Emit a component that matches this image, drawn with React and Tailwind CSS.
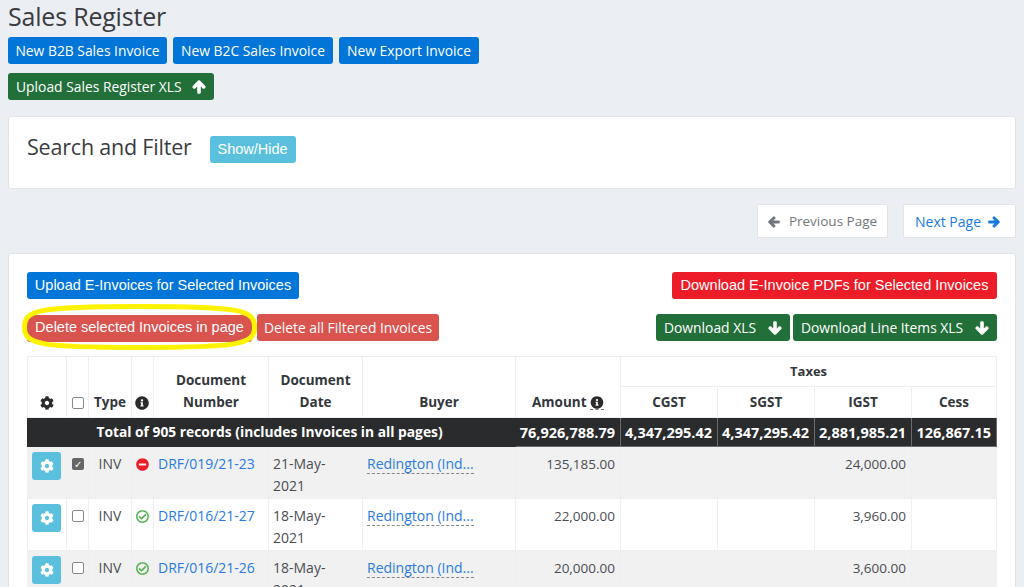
import React from 'react';
import { FaArrowUp, FaArrowDown, FaArrowLeft, FaArrowRight, FaCog, FaInfoCircle, FaMinusCircle, FaRegCheckCircle } from 'react-icons/fa';

const ROWS = [
  { doc: 'DRF/019/21-23', date: ['21-May-', '2021'], amount: '135,185.00', igst: '24,000.00', checked: true, cancelled: true },
  { doc: 'DRF/016/21-27', date: ['18-May-', '2021'], amount: '22,000.00', igst: '3,960.00' },
  { doc: 'DRF/016/21-26', date: ['18-May-', '2021'], amount: '20,000.00', igst: '3,600.00' },
];

const btn = 'inline-flex items-center h-[27px] px-2 rounded-[3px] text-white whitespace-nowrap';
const btnSegoe = `${btn} pt-[2px] text-[13.85px]`;
const btnArial = `${btn} text-[14.5px] font-['Liberation_Sans',Arial,sans-serif]`;
const segoe = "font-['Open_Sans','Noto_Sans',sans-serif]";
const cell = 'border border-[#efefef] align-top';
const text = 'pt-[6px] text-[14px] leading-[22px]';
const money = 'pt-[6px] pr-[5px] text-right text-[13.5px] leading-[22px]';
const head = 'border border-[#efefef] align-bottom text-center font-bold text-[13.5px] leading-[22px] text-[#33373c] pb-[4px] px-1';
const total = 'border border-[#6b6b6b] text-right font-bold text-[14.5px] text-white pr-[5px] h-[29px] whitespace-nowrap';
const thick = 'stroke-[50]';

export default function App() {
  return (
    <div className={`w-[1024px] h-[587px] overflow-hidden bg-[#ebeef3] px-2 text-[#4a4e53] ${segoe}`}>
      <h1 className="h-[37px] pt-[1px] text-[25px] leading-[30px] font-medium text-[#3a3c40] tracking-[-0.2px]">Sales Register</h1>

      <div className="flex gap-[6px]">
        <a className={`${btnSegoe} w-[159px] bg-[#0275d8] justify-center`}>New B2B Sales Invoice</a>
        <a className={`${btnSegoe} w-[160px] bg-[#0275d8] justify-center`}>New B2C Sales Invoice</a>
        <a className={`${btnSegoe} w-[140px] bg-[#0275d8] justify-center`}>New Export Invoice</a>
      </div>
      <div className="mt-[9px]">
        <a className={`${btnSegoe} w-[206px] bg-[#236f3a] justify-between`}>
          Upload Sales Register XLS <FaArrowUp className={`w-[14px] h-[14px] -mt-[2px] ${thick}`} />
        </a>
      </div>

      <div className="mt-[16px] h-[73px] bg-white border border-[#e2e4e8] rounded-[3px] flex items-center pl-[18px] pb-[11px]">
        <h2 className="text-[21.5px] font-medium text-[#3a3c40] tracking-[-0.2px]">Search and Filter</h2>
        <a className={`${btnArial} w-[86px] justify-center ml-[18px] mt-[5px] bg-[#5bc0de]`}>Show/Hide</a>
      </div>

      <div className="mt-[15px] flex justify-end gap-[15px]">
        <a className="flex items-center justify-center gap-[9px] w-[131px] h-[34px] pt-[1px] bg-white border border-[#e2e4e8] rounded-[2px] text-[13.5px] text-[#72777c]">
          <FaArrowLeft className={`w-[12px] h-[12px] ${thick}`} /> Previous Page
        </a>
        <a className="flex items-center gap-[7px] w-[113px] h-[34px] pt-[1px] pl-[11px] bg-white border border-[#e2e4e8] rounded-[2px] text-[14px] text-[#1a7ae0]">
          Next Page <FaArrowRight className={`w-[12px] h-[12px] ${thick}`} />
        </a>
      </div>

      <div className="mt-[15px] bg-white border border-[#e2e4e8] rounded-[3px] pt-[18px] px-[18px] h-[400px]">
        <div className="flex justify-between">
          <a className={`${btnArial} w-[272px] justify-center bg-[#0275d8]`}>Upload E-Invoices for Selected Invoices</a>
          <a className={`${btnArial} w-[325px] justify-center bg-[#ec1c28]`}>Download E-Invoice PDFs for Selected Invoices</a>
        </div>

        <div className="mt-[15px] flex justify-between">
          <div className="flex gap-[5px]">
            <div className="relative">
              <a className={`${btnArial} w-[225px] pb-[2px] justify-center bg-[#d9534f]`}>Delete selected Invoices in page</a>
              <svg className="absolute left-[-5px] top-[-10px]" width="235" height="46" viewBox="0 0 235 46" fill="none">
                <path d="M2.5 23C2.5 6 16 2.5 117.5 2.5C219 2.5 232.5 6 232.5 23C232.5 40 219 43.5 117.5 43.5C16 43.5 2.5 40 2.5 23Z" stroke="#fff200" strokeWidth="5" />
              </svg>
            </div>
            <a className={`${btnSegoe} w-[182px] justify-center bg-[#d9534f]`}>Delete all Filtered Invoices</a>
          </div>
          <div className="flex gap-[3px]">
            <a className={`${btnSegoe} w-[134px] justify-between bg-[#236f3a]`}>
              Download XLS <FaArrowDown className={`w-[14px] h-[14px] -mt-[2px] ${thick}`} />
            </a>
            <a className={`${btnSegoe} w-[204px] justify-between bg-[#236f3a]`}>
              Download Line Items XLS <FaArrowDown className={`w-[14px] h-[14px] -mt-[2px] ${thick}`} />
            </a>
          </div>
        </div>

        <table className="mt-[14px] w-[970px] table-fixed border-collapse text-[14px]">
          <colgroup>
            <col className="w-[39px]" />
            <col className="w-[22px]" />
            <col className="w-[43px]" />
            <col className="w-[22px]" />
            <col className="w-[115px]" />
            <col className="w-[94px]" />
            <col className="w-[153px]" />
            <col className="w-[105px]" />
            <col className="w-[97px]" />
            <col className="w-[97px]" />
            <col className="w-[97px]" />
            <col className="w-[85px]" />
          </colgroup>
          <thead>
            <tr className="h-[30px]">
              <th rowSpan={2} className={head}><FaCog className="w-[14px] h-[14px] mx-auto mb-[3px] text-[#2b2b2b]" /></th>
              <th rowSpan={2} className={head}>
                <span className="block w-[12px] h-[12px] mx-auto mb-[4px] border border-[#8a8a8a] rounded-[2px] bg-white" />
              </th>
              <th rowSpan={2} className={`${head} !px-0`}>Type</th>
              <th rowSpan={2} className={head}><FaInfoCircle className="w-[14px] h-[14px] -ml-[1px] mb-[3px] text-[#2b2b2b]" /></th>
              <th rowSpan={2} className={head}>Document<br />Number</th>
              <th rowSpan={2} className={head}>Document<br />Date</th>
              <th rowSpan={2} className={head}>Buyer</th>
              <th rowSpan={2} className={`${head} whitespace-nowrap`}>
                Amount <FaInfoCircle className="inline w-[14px] h-[14px] mb-[2px] text-[#2b2b2b] border-b border-dashed border-[#777]" />
              </th>
              <th colSpan={4} className="border border-[#efefef] text-center font-bold text-[13px] text-[#33373c]">Taxes</th>
            </tr>
            <tr className="h-[31px]">
              <th className={head}>CGST</th>
              <th className={head}>SGST</th>
              <th className={head}>IGST</th>
              <th className={head}>Cess</th>
            </tr>
            <tr className="bg-[#292b2c]">
              <th colSpan={7} className="border border-[#292b2c] text-center font-bold text-[13.8px] text-white h-[29px] pr-[4px]">
                Total of 905 records (includes Invoices in all pages)
              </th>
              <th className={total}>76,926,788.79</th>
              <th className={total}>4,347,295.42</th>
              <th className={total}>4,347,295.42</th>
              <th className={total}>2,881,985.21</th>
              <th className={total}>126,867.15</th>
            </tr>
          </thead>
          <tbody>
            {ROWS.map((r, i) => (
              <tr key={r.doc} className={`h-[52px] ${i % 2 === 0 ? 'bg-[#f1f1f1]' : 'bg-white'}`}>
                <td className={cell}>
                  <span className="flex items-center justify-center w-[29px] h-[28px] mt-[5px] ml-[4px] rounded-[3px] bg-[#5bc0de] text-white">
                    <FaCog className="w-[14px] h-[14px]" />
                  </span>
                </td>
                <td className={cell}>
                  {r.checked ? (
                    <span className="flex items-center justify-center w-[12px] h-[12px] mt-[11px] mx-auto rounded-[2px] bg-[#666] text-white text-[10px] leading-none">✓</span>
                  ) : (
                    <span className="block w-[12px] h-[12px] mt-[11px] mx-auto border border-[#8a8a8a] rounded-[2px] bg-white" />
                  )}
                </td>
                <td className={`${cell} ${text} text-center`}>INV</td>
                <td className={cell}>
                  {r.cancelled ? (
                    <FaMinusCircle className="w-[13px] h-[13px] mt-[11px] mx-auto text-[#ec1c28]" />
                  ) : (
                    <FaRegCheckCircle className="w-[13px] h-[13px] mt-[11px] mx-auto text-[#4cae4c] stroke-[10]" />
                  )}
                </td>
                <td className={`${cell} ${text} pl-[4px] text-[#2a7ae2] whitespace-nowrap`}>{r.doc}</td>
                <td className={`${cell} ${text} pl-[4px]`}>{r.date[0]}<br />{r.date[1]}</td>
                <td className={`${cell} ${text} pl-[4px] text-[#2a7ae2]`}>
                  <span className="border-b border-dashed border-[#888]">Redington (Ind...</span>
                </td>
                <td className={`${cell} ${money}`}>{r.amount}</td>
                <td className={cell} />
                <td className={cell} />
                <td className={`${cell} ${money}`}>{r.igst}</td>
                <td className={cell} />
              </tr>
            ))}
          </tbody>
        </table>
      </div>
    </div>
  );
}
